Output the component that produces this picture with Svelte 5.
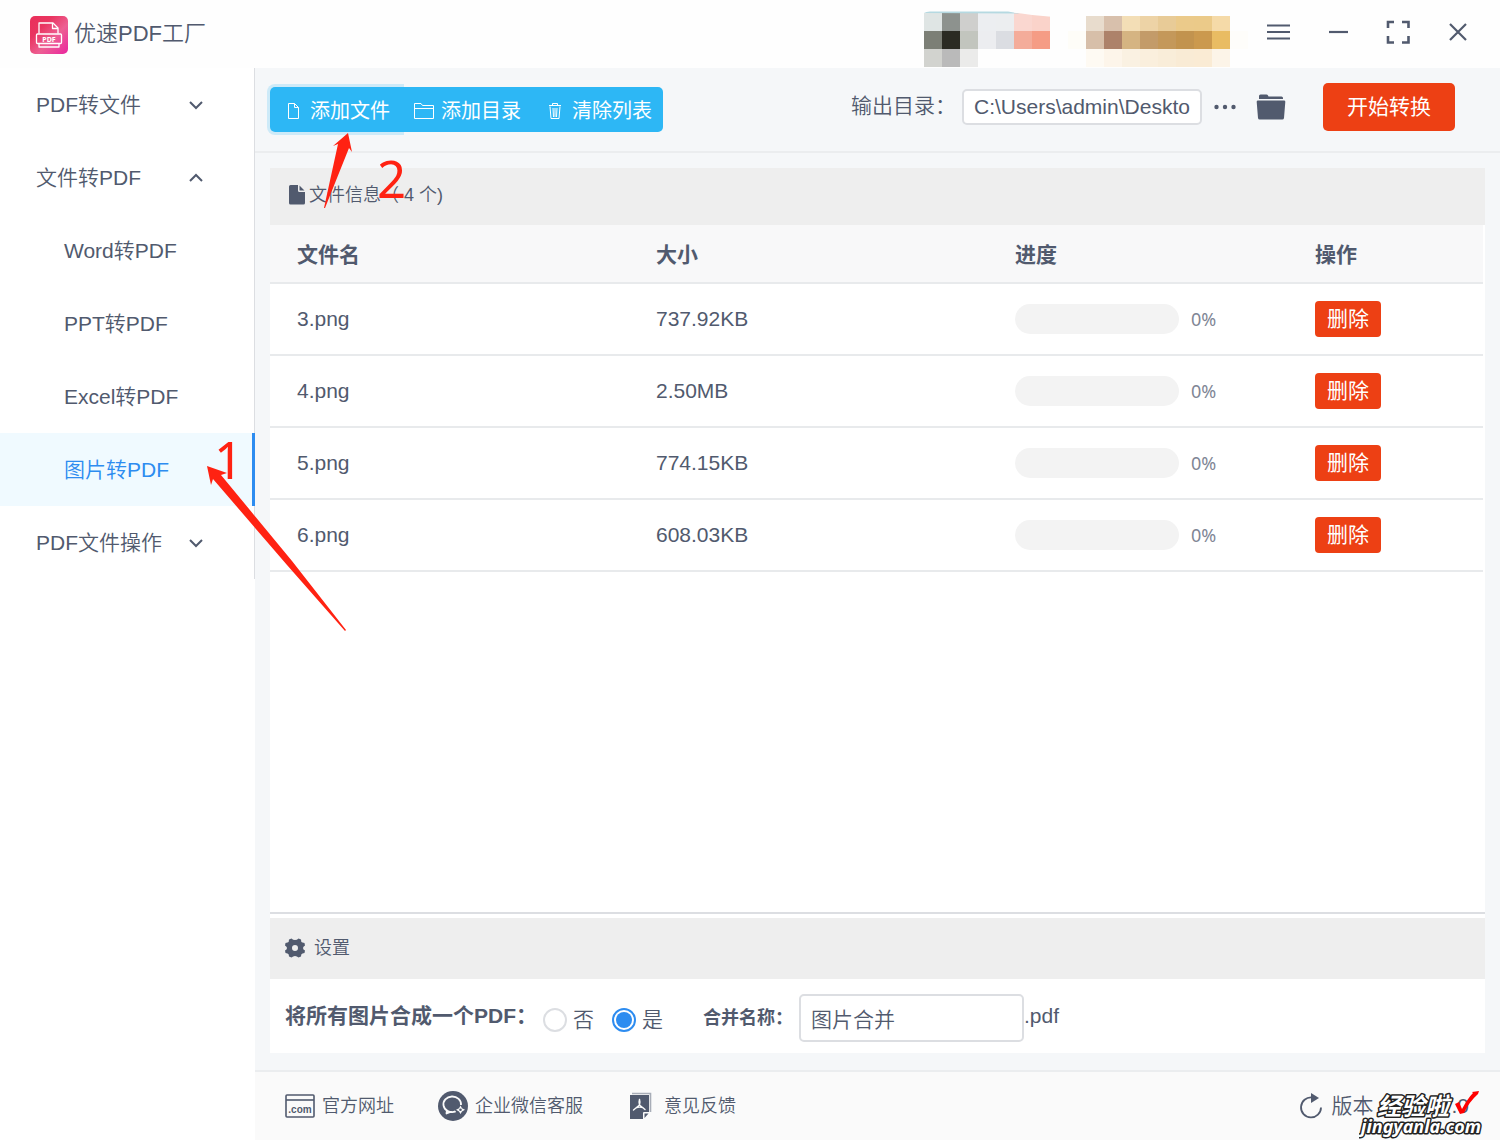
<script lang="ts">
  interface FileRow {
    name: string;
    size: string;
    progress: number;
  }

  const CELL = 18;
  // column, row, colour
  const mosaic: [number, number, string][] = [
    [1, 0, '#dfe5e4'], [2, 0, '#8d928e'], [3, 0, '#cfcfcd'], [4, 0, '#eceef1'], [5, 0, '#eceef0'], [6, 0, '#fad7d0'], [7, 0, '#fad3ca'],
    [1, 1, '#7c7f76'], [2, 1, '#2b2b23'], [3, 1, '#c2c5be'], [4, 1, '#ecedf0'], [5, 1, '#dbdde2'], [6, 1, '#f4ac9a'], [7, 1, '#f59c85'],
    [1, 2, '#d2d3cf'], [2, 2, '#bababa'], [3, 2, '#ebebea'],
    [10, 0, '#e8dccd'], [11, 0, '#d8c0ac'], [12, 0, '#f3deb6'], [13, 0, '#edd3a6'], [14, 0, '#e8cb97'], [15, 0, '#ebca8a'], [16, 0, '#ebca89'], [17, 0, '#f5daa8'],
    [9, 1, '#fefdf8'], [10, 1, '#d7bfa9'], [11, 1, '#ad826a'], [12, 1, '#d5b482'], [13, 1, '#c39b69'], [14, 1, '#c4985a'], [15, 1, '#c2934e'], [16, 1, '#cb994e'], [17, 1, '#e9bc63'], [18, 1, '#fefdfa'],
    [10, 2, '#fefaf3'], [11, 2, '#fdf5ea'], [12, 2, '#faf1e2'], [13, 2, '#faefdd'], [14, 2, '#f9edd9'], [15, 2, '#f9ebd5'], [16, 2, '#faebd4'], [17, 2, '#fcf4e8']
  ];

  const imageTools = ['Word转PDF', 'PPT转PDF', 'Excel转PDF', '图片转PDF'];

  let active = $state('图片转PDF');
  let open = $state(true);
  let outputDir = $state('C:\\Users\\admin\\Deskto');
  let merge = $state('yes');
  let mergeName = $state('图片合并');
  let files: FileRow[] = $state([
    { name: '3.png', size: '737.92KB', progress: 0 },
    { name: '4.png', size: '2.50MB', progress: 0 },
    { name: '5.png', size: '774.15KB', progress: 0 },
    { name: '6.png', size: '608.03KB', progress: 0 }
  ]);

  function remove(name: string) {
    files = files.filter((f) => f.name !== name);
  }
</script>

{#snippet chevron(up: boolean)}
  <svg class="chevron" viewBox="0 0 14 14" width="14" height="14" aria-hidden="true">
    <path d={up ? 'M1 10l6-6 6 6' : 'M1 4l6 6 6-6'} fill="none" stroke="currentColor" stroke-width="2" />
  </svg>
{/snippet}

<div class="window">
  <header class="titlebar">
    <svg class="logo" viewBox="0 0 38 38" width="38" height="38" aria-hidden="true">
      <defs>
        <linearGradient id="logo-bg" x1="0" y1="0" x2="1" y2="1">
          <stop offset="0" stop-color="#ea2f5a" />
          <stop offset="0.3" stop-color="#e93560" />
          <stop offset="0.6" stop-color="#ed5f93" />
          <stop offset="1" stop-color="#ea259f" />
        </linearGradient>
      </defs>
      <rect width="38" height="38" rx="5" fill="url(#logo-bg)" />
      <g fill="none" stroke="#fff" stroke-width="1.3" stroke-linejoin="round">
        <path d="M9 17.500V7h14l5 5v5.500" />
        <path d="M22.500 7v5.500H28" />
        <rect x="6.500" y="18" width="25" height="9.500" rx="1" />
        <path d="M9 28v3h20v-3" />
      </g>
      <text class="logo-text" x="19" y="25.500" text-anchor="middle">PDF</text>
    </svg>
    <h1>优速PDF工厂</h1>
    <svg class="mosaic" viewBox="0 0 342 57" width="342" height="57" aria-hidden="true">
      {#each mosaic as [col, row, fill]}
        <rect x={col * CELL} y={row * CELL + 2} width={CELL} height={CELL} {fill} />
      {/each}
      <path d="M18 2q2-1.500 6-1.500h78l12 2z" fill="#b5d9e1" />
      <path d="M108 0h40v6q-20-1-40-4.500zM180 0h150v5h-150z" fill="#fefefe" />
    </svg>
    <button class="win-btn" aria-label="菜单">
      <svg viewBox="0 0 24 24" width="24" height="24"><path d="M1 5.500h23M1 12h23M1 18.500h23" /></svg>
    </button>
    <button class="win-btn" aria-label="最小化">
      <svg viewBox="0 0 24 24" width="24" height="24"><path d="M3 12h19" /></svg>
    </button>
    <button class="win-btn" aria-label="最大化">
      <svg viewBox="0 0 24 24" width="24" height="24">
        <path class="thick" d="M2 8V2h6M16 2h6.500v6M22.500 16v6.500H16M8 22.500H2V16" />
      </svg>
    </button>
    <button class="win-btn" aria-label="关闭">
      <svg viewBox="0 0 24 24" width="24" height="24"><path d="M4 4l16 16M20 4L4 20" /></svg>
    </button>
  </header>

  <div class="body">
    <aside>
      <nav>
        <button class="menu-title">PDF转文件{@render chevron(false)}</button>
        <button class="menu-title" aria-expanded={open} onclick={() => (open = !open)}>
          文件转PDF{@render chevron(open)}
        </button>
        {#if open}
          {#each imageTools as tool}
            <button class="menu-item" class:active={active === tool} onclick={() => (active = tool)}>{tool}</button>
          {/each}
        {/if}
        <button class="menu-title">PDF文件操作{@render chevron(false)}</button>
      </nav>
    </aside>

    <main>
      <div class="toolbar">
        <div class="btn-group">
          <button class="focused">
            <svg viewBox="0 0 24 20" width="24" height="20" aria-hidden="true">
              <path d="M7.500 2.500h6l4 4v11h-10zM13.500 2.500v4h4" />
            </svg>
            添加文件
          </button>
          <button>
            <svg viewBox="0 0 24 20" width="24" height="20" aria-hidden="true">
              <path d="M2.500 17.500v-15h6.500l1.500 2h11v13zM2.500 7.500h19" />
            </svg>
            添加目录
          </button>
          <button>
            <svg viewBox="0 0 24 20" width="24" height="20" aria-hidden="true">
              <path d="M6 4.500h12M9.500 4.500V2.500h5v2M7 5.500l1 12h8l1-12M10 7l.5 9M12 7v9M14 7l-.5 9" />
            </svg>
            清除列表
          </button>
        </div>
        <div class="output">
          <label for="out-dir">输出目录：</label>
          <input id="out-dir" type="text" bind:value={outputDir} />
          <button class="icon-btn more" aria-label="选择目录">
            <svg viewBox="0 0 22 6" width="22" height="6">
              <circle cx="2.500" cy="3" r="2.200" /><circle cx="11" cy="3" r="2.200" /><circle cx="19.500" cy="3" r="2.200" />
            </svg>
          </button>
          <button class="icon-btn" aria-label="打开目录">
            <svg viewBox="0 0 30 26" width="30" height="26">
              <path d="M3 5V2q0-1.500 1.500-1.500h6q1 0 1.500 1l.5 1h13q1.500 0 1.500 1.500v1z" />
              <path d="M2 6.500h26q1.500 0 1.300 1.500l-1.300 16q-.2 1.500-1.700 1.500H3.700q-1.500 0-1.700-1.500L.7 8Q.5 6.500 2 6.500z" />
            </svg>
          </button>
          <button class="start">开始转换</button>
        </div>
      </div>

      <div class="content">
        <section class="files">
          <h2 class="bar">
            <svg viewBox="0 0 16 20" width="16" height="20" aria-hidden="true">
              <path d="M1.500 0H9v5.500q0 1.500 1.500 1.500H16v11q0 1.500-1.500 1.500h-13Q0 19.500 0 18V1.500Q0 0 1.500 0zM10.500 0.500L15.500 5.500h-5z" />
            </svg>
            <span>文件信息（ {files.length} 个)</span>
          </h2>
          <table>
            <thead>
              <tr>
                <th class="c-name">文件名</th>
                <th class="c-size">大小</th>
                <th class="c-progress">进度</th>
                <th>操作</th>
              </tr>
            </thead>
            <tbody>
              {#each files as file (file.name)}
                <tr>
                  <td>{file.name}</td>
                  <td>{file.size}</td>
                  <td>
                    <div class="progress">
                      <div class="track"><div class="fill" style="width: {file.progress}%"></div></div>
                      <span>{file.progress}%</span>
                    </div>
                  </td>
                  <td><button class="delete" onclick={() => remove(file.name)}>删除</button></td>
                </tr>
              {/each}
            </tbody>
          </table>
        </section>

        <section class="settings">
          <h2 class="bar">
            <svg viewBox="0 0 20 20" width="20" height="20" aria-hidden="true">
              <path fill-rule="evenodd" d="M6.500 0.500Q8 2 10 2t3.500-1.500L16 1.500q-.2 2.500 1.500 3l2 .5.5 2.500Q18 8.500 18 10t2 2.500l-.5 2.500-2 .5q-1.700.500-1.500 3l-2.500 1Q12 18 10 18t-3.500 1.500L4 18.500q.2-2.500-1.500-3l-2-.5L0 12.500Q2 11.500 2 10T0 7.500L.5 5l2-.5q1.700-.500 1.500-3zM10 7a3 3 0 100 6 3 3 0 000-6z" />
            </svg>
            <span>设置</span>
          </h2>
          <div class="options">
            <fieldset>
              <legend>将所有图片合成一个PDF：</legend>
              <label><input type="radio" value="no" bind:group={merge} />否</label>
              <label><input type="radio" value="yes" bind:group={merge} />是</label>
            </fieldset>
            <label class="name-label" for="merge-name">合并名称：</label>
            <input id="merge-name" type="text" bind:value={mergeName} />
            <span>.pdf</span>
          </div>
        </section>
      </div>

      <footer>
        <a href="#site">
          <svg viewBox="0 0 30 24" width="30" height="24" aria-hidden="true">
            <rect x="1" y="1" width="28" height="22" rx="1" fill="none" stroke="currentColor" stroke-width="1.600" />
            <path d="M1 6h28" stroke="currentColor" stroke-width="1.600" />
            <text class="com" x="15" y="19" text-anchor="middle">.com</text>
          </svg>
          官方网址
        </a>
        <a href="#wecom">
          <svg viewBox="0 0 30 30" width="30" height="30" aria-hidden="true">
            <circle cx="15" cy="15" r="15" fill="currentColor" />
            <path d="M23 14A8.800 7.800 0 1 0 17 20.700q-2 .6-4.500.2L8.500 22.500l.5-3.500" fill="none" stroke="#fafafa" stroke-width="1.800" stroke-linejoin="round" />
            <path d="M22.500 14.500l1.500 2.700 3 1.600-3 1.600-1.500 2.700-1.500-2.700-3-1.600 3-1.600z" fill="#fafafa" />
            <circle cx="22.500" cy="18.800" r="1.300" fill="currentColor" />
          </svg>
          企业微信客服
        </a>
        <a href="#feedback" class="feedback">
          <svg viewBox="0 0 24 28" width="24" height="28" aria-hidden="true">
            <path d="M3 1.500h18.500V20" fill="none" stroke="#a8adb7" stroke-width="1.600" />
            <path d="M1 3h19v17h-5q-1 0-1 1v6H1zM15.500 21.500h4l-4 4.500z" fill="currentColor" />
            <path d="M10.500 7.500q-1 3 0 5.500M10.500 7.500q1 3 0 5.500M10.500 13l-6 5M10.500 13l5.500 4.500M7 15.800q3.500-1.200 7-.1" fill="none" stroke="#fafafa" stroke-width="1.400" stroke-linecap="round" />
          </svg>
          意见反馈
        </a>
        <div class="version">
          <svg viewBox="0 0 24 26" width="24" height="26" aria-hidden="true">
            <path d="M13 4.500A10 10 0 1 0 22 14.500" fill="none" stroke="currentColor" stroke-width="1.800" />
            <path d="M12 0l8 5-8 5z" fill="currentColor" />
          </svg>
          <span>版本</span>
          <span class="number">.0</span>
          <div class="watermark">
            <svg viewBox="0 0 130 60" width="130" height="60">
              <g class="outlined">
                <text class="wm-cn" x="18" y="36">经验啦</text>
                <text class="wm-en" x="2" y="54">jingyanla.com</text>
              </g>
              <path d="M96 25l4-2 3 7q6-11 11-16l-1-1 7-1-1 3q-9 8-14 19l-4 1z" fill="#f00" />
            </svg>
          </div>
        </div>
      </footer>
    </main>
  </div>

  <svg class="notes" viewBox="0 0 420 640" width="420" height="640" aria-hidden="true">
    <path d="M348 133l4 19-3-4-24 60-1 0 14-64-5 2z" />
    <path d="M207 466l20 7-6 2 71 86 54 69-1 1-58-66-74-86-2 6z" />
    <text x="377" y="198">2</text>
    <text x="214" y="479">1</text>
  </svg>
</div>

<style>
  :global(body) {
    background: #fefefe;
  }
  .window {
    position: relative;
    display: flex;
    flex-direction: column;
    min-height: 100vh;
    color: #515a6e;
    font-family: 'Liberation Sans', 'Noto Sans CJK SC', sans-serif;
    font-size: 21px;
    font-weight: 350;
    line-height: 30px;
  }
  .window * {
    box-sizing: border-box;
  }
  button,
  input {
    margin: 0;
    padding: 0;
    border: 0;
    background: none;
    color: inherit;
    font: inherit;
  }
  button {
    cursor: pointer;
  }
  svg {
    flex: none;
    display: block;
  }
  h1,
  h2 {
    margin: 0;
    font-weight: inherit;
  }
  .titlebar {
    display: flex;
    align-items: center;
    height: 68px;
    padding: 0 12px 0 30px;
    background: #fefefe;
  }
  .logo {
    margin-top: 2px;
  }
  .logo-text {
    fill: #fff;
    font: bold 7px 'Noto Sans', sans-serif;
  }
  h1 {
    margin-left: 6px;
    font-size: 22px;
  }
  .mosaic {
    align-self: flex-end;
    margin-left: auto;
  }
  .win-btn {
    display: flex;
    justify-content: center;
    align-items: center;
    width: 60px;
    height: 64px;
    margin-bottom: 4px;
  }
  .win-btn path {
    fill: none;
    stroke: currentColor;
    stroke-width: 2.2;
  }
  .win-btn .thick {
    stroke-width: 2.6;
  }
  .body {
    flex: 1;
    display: flex;
  }
  aside {
    flex: none;
    width: 255px;
    background: #fff;
  }
  nav {
    display: flex;
    flex-direction: column;
    border-right: 1px solid #dcdee2;
  }
  .menu-title,
  .menu-item {
    height: 73px;
    text-align: left;
  }
  .menu-title {
    display: flex;
    justify-content: space-between;
    align-items: center;
    padding: 0 51px 0 36px;
  }
  .menu-item {
    padding-left: 64px;
  }
  .menu-item.active {
    margin-right: -1px;
    border-right: 3px solid #2d8cf0;
    background: #f0faff;
    color: #2d8cf0;
  }
  main {
    flex: 1;
    min-width: 0;
    display: flex;
    flex-direction: column;
    background: #f5f7f9;
  }
  .toolbar {
    display: flex;
    justify-content: space-between;
    align-items: center;
    height: 85px;
    padding: 0 45px 5px 15px;
    border-bottom: 2px solid #ebedef;
  }
  .btn-group {
    display: flex;
    margin-top: 5px;
    border-radius: 5px;
    background: #2db7f5;
    color: #fff;
    font-size: 20px;
    font-weight: 400;
  }
  .btn-group button {
    display: flex;
    align-items: center;
    gap: 5px;
    height: 45px;
    padding: 2px 11px 0;
    white-space: nowrap;
  }
  .btn-group path {
    fill: none;
    stroke: #fff;
    stroke-width: 1;
  }
  .btn-group .focused {
    border-radius: 5px 0 0 5px;
    box-shadow: 0 0 0 3px rgba(45, 183, 245, 0.2);
  }
  .output {
    display: flex;
    align-items: center;
    white-space: nowrap;
  }
  .output label {
    padding-bottom: 3px;
  }
  input[type='text'] {
    border: 2px solid #dcdee2;
    border-radius: 5px;
    background: #fff;
  }
  #out-dir {
    width: 240px;
    height: 36px;
    margin-left: 6px;
    padding: 0 10px;
  }
  .icon-btn svg {
    fill: currentColor;
  }
  .more {
    margin: 0 20px 0 12px;
  }
  .start {
    width: 132px;
    height: 48px;
    margin-left: 37px;
    border-radius: 5px;
    background: #ed4014;
    color: #fff;
    font-weight: 400;
  }
  .content {
    flex: 1;
    display: flex;
    flex-direction: column;
    padding: 15px 15px 17px;
  }
  .files {
    flex: 1;
    border-bottom: 2px solid #dcdee2;
    background: #fff;
  }
  .bar {
    display: flex;
    align-items: center;
    height: 57px;
    padding: 0 19px 3px;
    background: #eee;
    font-size: 18px;
  }
  .bar svg {
    fill: currentColor;
  }
  .bar span {
    margin-left: 4px;
  }
  table {
    width: calc(100% - 2px);
    border-collapse: separate;
    border-spacing: 0;
    table-layout: fixed;
  }
  th,
  td {
    height: 72px;
    padding: 0 0 0 27px;
    border-bottom: 2px solid #e8eaec;
    text-align: left;
  }
  th {
    height: 59px;
    padding-top: 2px;
    background: #f8f8f9;
    font-weight: 700;
  }
  .c-name,
  .c-size {
    width: 359px;
  }
  .c-progress {
    width: 300px;
  }
  .progress {
    display: flex;
    align-items: center;
    gap: 12px;
    font-family: 'Noto Sans', sans-serif;
    font-size: 18px;
    font-weight: 400;
    color: #808695;
  }
  .track {
    width: 164px;
    height: 30px;
    border-radius: 15px;
    background: #f3f3f3;
    overflow: hidden;
  }
  .fill {
    height: 100%;
    background: #2db7f5;
  }
  .delete {
    display: block;
    width: 66px;
    height: 36px;
    border-radius: 4px;
    background: #ed4014;
    color: #fff;
    font-weight: 400;
  }
  .settings {
    padding-top: 4px;
    background: #fff;
  }
  .settings .bar {
    height: 61px;
    padding: 0 15px 2px;
  }
  .settings .bar span {
    margin-left: 9px;
  }
  .options {
    display: flex;
    align-items: center;
    height: 74px;
    padding: 4px 15px 0;
    white-space: nowrap;
  }
  .options > span {
    padding-bottom: 4px;
  }
  fieldset {
    display: flex;
    align-items: center;
    margin: 0;
    padding: 0;
    border: 0;
  }
  legend {
    float: left;
    padding: 0 6px 4px 0;
    font-weight: 700;
  }
  fieldset label {
    display: flex;
    align-items: center;
    gap: 6px;
    margin: 4px 18px 0 0;
  }
  input[type='radio'] {
    appearance: none;
    width: 24px;
    height: 24px;
    border: 2px solid #dcdee2;
    border-radius: 50%;
    background: #fff;
  }
  input[type='radio']:checked {
    padding: 2px;
    border-color: #2d8cf0;
    background: #2d8cf0 content-box;
  }
  .name-label {
    margin-left: 22px;
    font-size: 18px;
    font-weight: 700;
  }
  #merge-name {
    width: 225px;
    height: 48px;
    margin-left: 6px;
    padding: 0 10px;
  }
  footer {
    display: flex;
    align-items: center;
    height: 70px;
    padding: 0 15px 0 30px;
    border-top: 2px solid #ebedef;
    background: #fafafa;
    font-size: 18px;
    white-space: nowrap;
  }
  footer a {
    display: flex;
    align-items: center;
    gap: 7px;
    margin-right: 44px;
    color: inherit;
    text-decoration: none;
  }
  footer .feedback {
    gap: 11px;
    margin-left: 2px;
  }
  .com {
    fill: currentColor;
    font: bold 10px 'Liberation Sans', sans-serif;
  }
  .version {
    position: relative;
    display: flex;
    align-items: center;
    gap: 8px;
    margin-left: auto;
    font-size: 21px;
  }
  .number {
    margin: 0 16px 0 70px;
  }
  .watermark {
    position: absolute;
    right: -4px;
    bottom: -18px;
  }
  .outlined {
    fill: #fff;
    stroke: #222;
    stroke-width: 3;
    paint-order: stroke;
    stroke-linejoin: round;
    font-style: italic;
    font-weight: 700;
  }
  .wm-cn {
    font-size: 24px;
    font-family: 'Noto Sans CJK SC', sans-serif;
  }
  .wm-en {
    font-size: 18px;
    font-family: 'Noto Sans', sans-serif;
  }
  .notes {
    position: absolute;
    top: 0;
    left: 0;
    fill: #ff2212;
    pointer-events: none;
  }
  .notes text {
    font: 400 51px 'Noto Sans', sans-serif;
  }
</style>
